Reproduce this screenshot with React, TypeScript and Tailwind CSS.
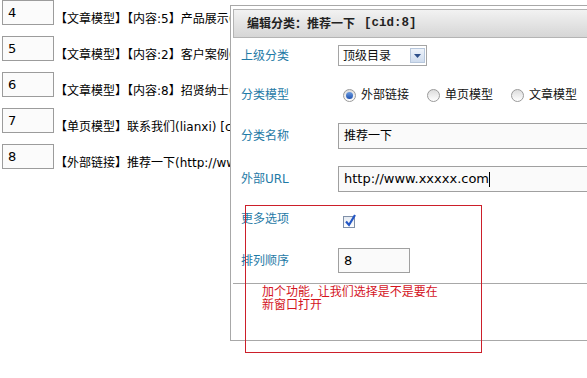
import React from 'react';

const rows = [
  { sort: '4', text: '【文章模型】【内容:5】产品展示(product) [cid:4]' },
  { sort: '5', text: '【文章模型】【内容:2】客户案例(case) [cid:5]' },
  { sort: '6', text: '【文章模型】【内容:8】招贤纳士(job) [cid:6]' },
  { sort: '7', text: '【单页模型】联系我们(lianxi) [cid:7]' },
  { sort: '8', text: '【外部链接】推荐一下(http://www.xxxxx.com) [cid:8]' },
];

const font = { fontFamily: '"DejaVu Sans", "Noto Sans CJK SC", sans-serif' };

const Label: React.FC<{ children: React.ReactNode }> = ({ children }) => (
  <div className="w-[107px] shrink-0 pl-[10px] text-[12px] leading-[14px] text-[#1f7aa6]">{children}</div>
);

const Radio: React.FC<{ checked?: boolean; label: string }> = ({ checked, label }) => (
  <label className="flex items-center gap-[5px] w-[84px] shrink-0">
    <span className="w-[13px] h-[13px] rounded-full border border-[#9a9a9a] bg-gradient-to-b from-[#dcdcdc] to-[#ffffff] flex items-center justify-center">
      {checked && <span className="w-[7px] h-[7px] rounded-full bg-gradient-to-b from-[#6d9ce0] to-[#1f52b0]" />}
    </span>
    <span className="text-[12px] leading-[14px] text-[#111]">{label}</span>
  </label>
);

const App: React.FC = () => {
  return (
    <div className="relative w-[587px] h-[378px] bg-white overflow-hidden" style={font}>
      {/* list behind the dialog, cut where the dialog starts */}
      <div className="flex flex-col gap-[11px] w-[230px] overflow-hidden">
        {rows.map(r => (
          <div key={r.sort} className="flex items-end h-[25px] whitespace-nowrap">
            <div className="ml-[2px] w-[52px] h-[25px] shrink-0 border border-[#9c9c9c] bg-[#fbfbfb] pl-[5px] text-[13px] leading-[23px] text-black">
              {r.sort}
            </div>
            <span className="ml-[1px] text-[12px] leading-[14px] text-black mb-[-1px]">{r.text}</span>
          </div>
        ))}
      </div>

      <div className="absolute left-[230px] top-[5px] w-[420px] h-[336px] border border-[#a8a8a8] bg-white">
        <div className="mt-[3px] ml-[2px] h-[29px] border border-[#b4b4b4] bg-gradient-to-b from-[#f2f2f2] to-[#d6d6d6] flex items-center pl-[13px]">
          <span className="text-[12px] font-bold text-[#222]">编辑分类：推荐一下</span>
          <span className="ml-[9px] text-[12.5px] font-bold text-[#222]" style={{ fontFamily: '"Liberation Mono", monospace' }}>[cid:8]</span>
        </div>

        <div className="flex items-center mt-[7px] h-[21px]">
          <Label>上级分类</Label>
          <div className="w-[89px] h-[21px] border border-[#a5a5a5] bg-white flex items-center justify-between pl-[4px] pr-[1px]">
            <span className="text-[12px] leading-[14px] text-[#111]">顶级目录</span>
            <span className="w-[15px] h-[15px] border border-[#b7c7dc] bg-gradient-to-b from-[#eef3fa] to-[#cfdcee] flex items-center justify-center">
              <svg width="7" height="4" viewBox="0 0 7 4"><path d="M0 0h7L3.5 4z" fill="#2d4f8a" /></svg>
            </span>
          </div>
        </div>

        <div className="flex items-center mt-[19px] h-[20px]">
          <Label>分类模型</Label>
          <div className="flex items-center pl-[5px]">
            <Radio checked label="外部链接" />
            <Radio label="单页模型" />
            <Radio label="文章模型" />
          </div>
        </div>

        <div className="flex items-center mt-[18px] h-[26px]">
          <Label>分类名称</Label>
          <div className="w-[300px] h-[26px] border border-[#a0a0a0] bg-[#fafafa] pl-[5px] flex items-center">
            <span className="text-[12px] leading-[14px] text-black">推荐一下</span>
          </div>
        </div>

        <div className="flex items-center mt-[17px] h-[26px]">
          <Label>外部URL</Label>
          <div className="w-[300px] h-[26px] border border-[#a0a0a0] bg-[#fafafa] pl-[5px] flex items-center">
            <span className="text-[13px] leading-[16px] text-black">http://www.xxxxx.com</span>
            <span className="w-px h-[15px] bg-black" />
          </div>
        </div>

        <div className="flex items-center mt-[17px] h-[20px]">
          <Label>更多选项</Label>
          <span className="ml-[5px] mt-[6px] w-[12px] h-[12px] border border-[#8090a8] bg-gradient-to-b from-[#e6ebf2] to-white relative">
            <svg className="absolute left-[0px] top-[-4px]" width="13" height="15" viewBox="0 0 13 15">
              <path d="M2 8.5l3 3.5L11 2" fill="none" stroke="#2457c5" strokeWidth="2.2" />
            </svg>
          </span>
        </div>

        <div className="flex items-center mt-[19px] h-[25px]">
          <Label>排列顺序</Label>
          <div className="w-[72px] h-[25px] border border-[#a0a0a0] bg-[#fafafa] pl-[5px] flex items-center">
            <span className="text-[13px] leading-[16px] text-black">8</span>
          </div>
        </div>

        <div className="mt-[10px] ml-[2px] border-t border-[#a8a8a8]" />
      </div>

      {/* red annotation drawn over the dialog */}
      <div className="absolute left-[245px] top-[205px] w-[237px] h-[148px] border border-[#cc1f2a] pl-[16px] pt-[80px]">
        <p className="text-[12px] leading-[13px] text-[#d4141e]">
          加个功能, 让我们选择是不是要在<br />新窗口打开
        </p>
      </div>
    </div>
  );
};

export default App;
